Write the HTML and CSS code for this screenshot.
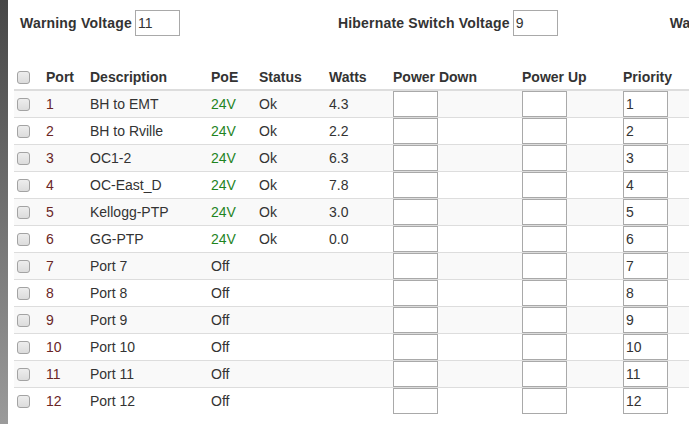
FILE: index.html
```html
<!DOCTYPE html>
<html>
<head>
<meta charset="utf-8">
<title>PoE Ports</title>
<link rel="stylesheet" href="styles.css">
</head>
<body>
<div class="page">
  <aside class="rail"></aside>
  <main class="content">
    <div class="settings">
      <label class="setting setting-warning">Warning Voltage <input class="field" type="text" value="11"></label>
      <label class="setting setting-hibernate">Hibernate Switch Voltage <input class="field" type="text" value="9"></label>
      <label class="setting setting-wake">Wake Voltage <input class="field" type="text" value="12"></label>
    </div>
    <table class="ports">
      <colgroup>
        <col class="c-check"><col class="c-port"><col class="c-desc"><col class="c-poe"><col class="c-status"><col class="c-watts"><col class="c-down"><col class="c-up"><col class="c-prio">
      </colgroup>
      <thead>
        <tr>
          <th class="check"><input class="box" type="checkbox"></th>
          <th>Port</th><th>Description</th><th>PoE</th><th>Status</th><th>Watts</th><th>Power Down</th><th>Power Up</th><th>Priority</th>
        </tr>
      </thead>
      <tbody>
        <tr><td class="check"><input class="box" type="checkbox"></td><td class="num">1</td><td>BH to EMT</td><td class="on">24V</td><td>Ok</td><td>4.3</td><td><input class="field" type="text"></td><td><input class="field" type="text"></td><td><input class="field" type="text" value="1"></td></tr>
        <tr><td class="check"><input class="box" type="checkbox"></td><td class="num">2</td><td>BH to Rville</td><td class="on">24V</td><td>Ok</td><td>2.2</td><td><input class="field" type="text"></td><td><input class="field" type="text"></td><td><input class="field" type="text" value="2"></td></tr>
        <tr><td class="check"><input class="box" type="checkbox"></td><td class="num">3</td><td>OC1-2</td><td class="on">24V</td><td>Ok</td><td>6.3</td><td><input class="field" type="text"></td><td><input class="field" type="text"></td><td><input class="field" type="text" value="3"></td></tr>
        <tr><td class="check"><input class="box" type="checkbox"></td><td class="num">4</td><td>OC-East_D</td><td class="on">24V</td><td>Ok</td><td>7.8</td><td><input class="field" type="text"></td><td><input class="field" type="text"></td><td><input class="field" type="text" value="4"></td></tr>
        <tr><td class="check"><input class="box" type="checkbox"></td><td class="num">5</td><td>Kellogg-PTP</td><td class="on">24V</td><td>Ok</td><td>3.0</td><td><input class="field" type="text"></td><td><input class="field" type="text"></td><td><input class="field" type="text" value="5"></td></tr>
        <tr><td class="check"><input class="box" type="checkbox"></td><td class="num">6</td><td>GG-PTP</td><td class="on">24V</td><td>Ok</td><td>0.0</td><td><input class="field" type="text"></td><td><input class="field" type="text"></td><td><input class="field" type="text" value="6"></td></tr>
        <tr><td class="check"><input class="box" type="checkbox"></td><td class="num">7</td><td>Port 7</td><td>Off</td><td></td><td></td><td><input class="field" type="text"></td><td><input class="field" type="text"></td><td><input class="field" type="text" value="7"></td></tr>
        <tr><td class="check"><input class="box" type="checkbox"></td><td class="num">8</td><td>Port 8</td><td>Off</td><td></td><td></td><td><input class="field" type="text"></td><td><input class="field" type="text"></td><td><input class="field" type="text" value="8"></td></tr>
        <tr><td class="check"><input class="box" type="checkbox"></td><td class="num">9</td><td>Port 9</td><td>Off</td><td></td><td></td><td><input class="field" type="text"></td><td><input class="field" type="text"></td><td><input class="field" type="text" value="9"></td></tr>
        <tr><td class="check"><input class="box" type="checkbox"></td><td class="num">10</td><td>Port 10</td><td>Off</td><td></td><td></td><td><input class="field" type="text"></td><td><input class="field" type="text"></td><td><input class="field" type="text" value="10"></td></tr>
        <tr><td class="check"><input class="box" type="checkbox"></td><td class="num">11</td><td>Port 11</td><td>Off</td><td></td><td></td><td><input class="field" type="text"></td><td><input class="field" type="text"></td><td><input class="field" type="text" value="11"></td></tr>
        <tr><td class="check"><input class="box" type="checkbox"></td><td class="num">12</td><td>Port 12</td><td>Off</td><td></td><td></td><td><input class="field" type="text"></td><td><input class="field" type="text"></td><td><input class="field" type="text" value="12"></td></tr>
      </tbody>
    </table>
  </main>
</div>
</body>
</html>
```

FILE: styles.css
```css
html, body {
  margin: 0;
  padding: 0;
  background: #fff;
}

body {
  font-family: "Liberation Sans", Arial, sans-serif;
  font-size: 14px;
  line-height: 16px;
  color: #333;
}

.page {
  display: flex;
  height: 100vh;
  overflow: hidden;
}

.rail {
  flex: none;
  width: 8px;
  background: linear-gradient(to bottom, #464646, #9b9b9b);
}

.content {
  flex: 1;
  min-width: 0;
  overflow: hidden;
  padding-left: 6px;
}

.settings {
  display: flex;
  align-items: center;
  padding: 10px 0 0 6px;
  white-space: nowrap;
}

.setting {
  display: flex;
  align-items: center;
  gap: 3px;
  font-weight: bold;
  letter-spacing: 0.2px;
  flex: none;
}

.setting-hibernate {
  margin-left: 158px;
}

.setting-wake {
  margin-left: 112px;
}

.field {
  display: block;
  box-sizing: border-box;
  width: 45px;
  height: 26px;
  margin: 0;
  padding: 0 2px;
  border: 1px solid #a9a9a9;
  border-radius: 0;
  background: #fff;
  font-family: "Liberation Sans", Arial, sans-serif;
  font-size: 14px;
  font-weight: normal;
  letter-spacing: 0;
  color: #333;
  outline: none;
}

.ports {
  margin-top: 26px;
  border-collapse: collapse;
  table-layout: fixed;
  width: 709px;
}

.c-check { width: 32px; }
.c-port { width: 44px; }
.c-desc { width: 121px; }
.c-poe { width: 48px; }
.c-status { width: 70px; }
.c-watts { width: 64px; }
.c-down { width: 129px; }
.c-up { width: 101px; }
.c-prio { width: 100px; }

.ports th {
  text-align: left;
  font-weight: bold;
  padding: 7px 0 4px;
  vertical-align: middle;
  border-bottom: 2px solid #ddd;
  white-space: nowrap;
}

.ports td {
  padding: 0;
  height: 26px;
  vertical-align: middle;
  border-top: 1px solid #ddd;
  white-space: nowrap;
}

.ports tbody tr:nth-child(odd) td {
  background: #f9f9f9;
}

.ports .check {
  padding-left: 3px;
}

.box {
  -webkit-appearance: none;
  appearance: none;
  display: block;
  width: 13px;
  height: 13px;
  margin: 0;
  box-sizing: border-box;
  border: 1px solid #a3a3a3;
  border-radius: 3px;
  background: linear-gradient(to bottom, #ededed, #dcdcdc);
}

.num {
  color: #6a2626;
}

.on {
  color: #1f841f;
}
```
